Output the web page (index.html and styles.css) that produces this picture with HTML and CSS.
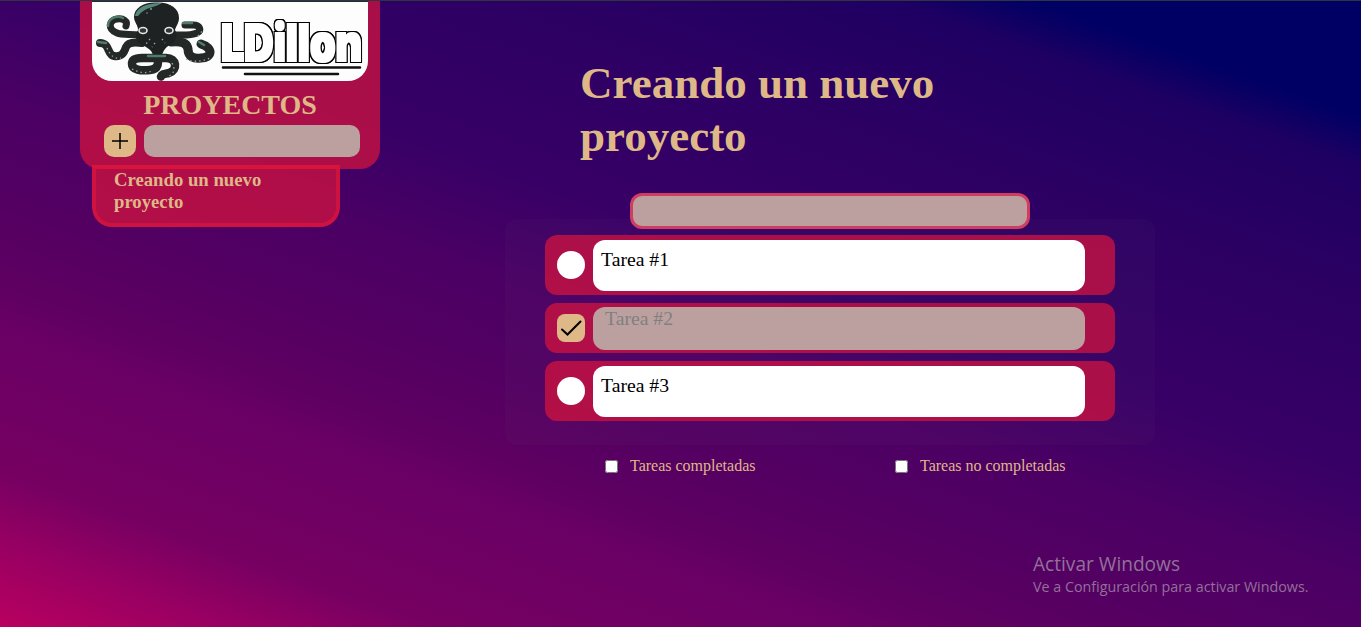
FILE: index.html
```html
<!DOCTYPE html>
<html lang="es">
<head>
<meta charset="utf-8">
<title>Proyectos</title>
<link rel="stylesheet" href="styles.css">
</head>
<body>
<div class="page">
  <aside class="sidebar">
    <div class="panel">
      <div class="logo">
        <svg class="logo-art" viewBox="0 0 276 79" width="276" height="79">
          <defs>
            <filter id="bubble" x="-5%" y="-5%" width="110%" height="110%" color-interpolation-filters="sRGB">
              <feMorphology in="SourceAlpha" operator="dilate" radius="2" result="wide"/>
              <feGaussianBlur in="wide" stdDeviation=".5" result="edge"/>
              <feMorphology in="SourceGraphic" operator="dilate" radius="1" result="face"/>
              <feMerge><feMergeNode in="edge"/><feMergeNode in="edge"/><feMergeNode in="face"/></feMerge>
            </filter>
          </defs>
          <g fill="none" stroke="#242827" stroke-width="8.500" stroke-linecap="round" stroke-linejoin="round">
            <path d="M48 33C38 32 30 33 25 31C15 27 17 18 25 17C31 16 36 19 34 24" stroke-width="7"/>
            <path d="M50 41C43 40 36 40 34 45C32 51 30 55 22 54C15 53 18 41 8 41" stroke-width="8"/>
            <path d="M81 33C90 33 98 34 105 31C110 28 108 23 101 23L93 23" stroke-width="7"/>
            <path d="M79 40C88 39 95 40 96 47C96 55 102 57 109 56C120 56 122 46 109 42" stroke-width="9"/>
            <path d="M65 48C65 56 70 67 58 68C49 69 40 68 40 62C40 57 44 56 50 56H74C85 56 86 68 77 71C72 72 70 72 69 74.500"/>
          </g>
          <path d="M42 15C42 6 52 0 64 .500C78 0 87 6 87 16C87 21 84 24 83 28C86 33 84 38 80 42C75 44 72 47 70 53H61C60 48 54 45 49 42C43 39 43 34 46 28C46 23 42 20 42 15Z" fill="#1e2222"/>
          <path d="M43 14C45 4 57 1 70 1C63 6 54 4 46 14Z" fill="#568778"/>
          <g fill="none" stroke="#4f7b6d" stroke-width="2.500" stroke-linecap="round">
            <path d="M16 24C16 16 25 13 31 16M6 40L14 41M91 21L100 21M107 40L112 43M56 54L73 54"/>
          </g>
          <g fill="none" stroke="#9ca7a3" stroke-width="1.300" stroke-dasharray="1.500 3">
            <path d="M15 46Q20 58 29 56M94 57Q105 62 118 56M40 67Q51 73 60 69M80 61Q85 70 77 74M106 34L111 28M58 37L54 42M70 37L73 41M63 41L60 45"/>
          </g>
          <ellipse cx="51" cy="28.500" rx="4" ry="3" fill="#333" stroke="#e4e8e6" stroke-width="1.600"/>
          <ellipse cx="77" cy="28.500" rx="4" ry="3" fill="#333" stroke="#e4e8e6" stroke-width="1.600"/>
          <circle cx="59" cy="7" r="1" fill="#76a293"/><circle cx="55" cy="11" r=".8" fill="#76a293"/>
          <text class="wordmark" x="129" y="59" textLength="141" lengthAdjust="spacingAndGlyphs" filter="url(#bubble)">LDillon</text>
          <path d="M131 65.500H268M153 72H246" stroke="#111" stroke-width="2.600" stroke-linecap="round"/>
        </svg>
      </div>
      <h2 class="panel-title">PROYECTOS</h2>
      <div class="new-project">
        <button class="add" aria-label="Agregar proyecto">
          <svg viewBox="0 0 16 16" width="16" height="16"><path d="M8 0V16M0 8H16" stroke="#000" stroke-width="1.500"/></svg>
        </button>
        <input class="project-input" type="text">
      </div>
    </div>
    <div class="project">Creando un nuevo proyecto</div>
  </aside>
  <main class="main">
    <h1 class="title">Creando un nuevo proyecto</h1>
    <input class="task-input" type="text">
    <section class="tasks">
      <div class="task"><span class="dot"></span><div class="text">Tarea #1</div></div>
      <div class="task task-done">
        <span class="check"><svg viewBox="0 0 28 28" width="28" height="28"><path d="M5 15.500L10.500 20.500L23.500 7.500" fill="none" stroke="#000" stroke-width="2" stroke-linecap="round"/></svg></span>
        <div class="text text-done">Tarea #2</div>
      </div>
      <div class="task"><span class="dot"></span><div class="text">Tarea #3</div></div>
    </section>
    <div class="filters">
      <label class="filter"><input class="box" type="checkbox">Tareas completadas</label>
      <label class="filter"><input class="box" type="checkbox">Tareas no completadas</label>
    </div>
  </main>
  <div class="watermark">
    <div class="watermark-title">Activar Windows</div>
    <div class="watermark-text">Ve a Configuración para activar Windows.</div>
  </div>
</div>
</body>
</html>
```
FILE: styles.css
```css
* { box-sizing: border-box; }
body { margin: 0; }
.page {
  position: relative;
  display: flex;
  align-items: flex-start;
  width: 1361px;
  height: 627px;
  overflow: hidden;
  padding-left: 80px;
  border-top: 1px solid #30343f;
  font-family: "Liberation Serif", "Times New Roman", serif;
  color: burlywood;
  background: linear-gradient(19.5deg, #b90060 0%, #960062 7.8%, #760062 14%, #6a0065 27%, #5e0062 31%, #540062 38%, #4c0064 47%, #380066 57%, #2c0063 73%, #1e0062 85%, #000064 89.500%);
}
.sidebar { width: 300px; }
.panel {
  height: 168px;
  padding: 0 12px;
  border-radius: 0 0 20px 20px;
  background: rgba(220, 20, 60, .7);
}
.logo {
  height: 80px;
  border-top: 1px solid #252936;
  border-radius: 0 0 20px 20px;
  background: #fdfdfd;
}
.logo-art { display: block; overflow: visible; }
.wordmark {
  font: 900 51px Inter, sans-serif;
  fill: #fff;
}
.panel-title {
  margin: 7px 0 4px;
  font-size: 28px;
  line-height: 33px;
  text-align: center;
}
.new-project { display: flex; gap: 8px; padding-left: 12px; }
.add {
  display: grid;
  place-items: center;
  width: 32px;
  height: 32px;
  padding: 0;
  border: 0;
  border-radius: 10px;
  background: burlywood;
}
.project-input {
  width: 216px;
  height: 32px;
  border: 0;
  border-radius: 10px;
  background: #bba09f;
}
.project {
  width: 248px;
  height: 62px;
  margin: -4px 0 0 12px;
  padding: 0 60px 0 18px;
  border: 4px solid rgba(220, 20, 60, .7);
  border-radius: 0 0 20px 20px;
  background: rgba(220, 20, 60, .7);
  font-size: 18.72px;
  font-weight: 700;
  line-height: 22px;
}
.main {
  display: flex;
  flex-direction: column;
  align-items: center;
  width: 650px;
  margin-left: 125px;
  padding-top: 56px;
}
.title {
  width: 500px;
  margin: 0 0 30px;
  padding-right: 100px;
  font-size: 45px;
  line-height: 53px;
}
.task-input {
  position: relative;
  width: 400px;
  height: 36px;
  border: 3px solid #d13c61;
  border-radius: 12px;
  background: #bba09f;
}
.tasks {
  display: flex;
  flex-direction: column;
  gap: 8px;
  width: 650px;
  height: 226px;
  margin-top: -10px;
  padding: 16px 40px 0;
  border-radius: 12px;
  background: rgba(128, 128, 128, .04);
}
.task {
  display: flex;
  align-items: center;
  gap: 8px;
  height: 60px;
  padding-left: 12px;
  border-radius: 12px;
  background: rgba(220, 20, 60, .7);
}
.task-done { height: 50px; }
.dot { width: 28px; height: 28px; border-radius: 50%; background: #fff; }
.check { width: 28px; height: 28px; border-radius: 8px; background: burlywood; }
.text {
  width: 492px;
  height: 51px;
  padding: 8px;
  border-radius: 12px;
  background: #fff;
  color: #000;
  font-size: 19.7px;
  line-height: 22px;
}
.text-done {
  height: 43px;
  padding: 0 12px;
  background: #bba09f;
  color: #808080;
}
.filters {
  display: grid;
  grid-template-columns: 290px 260px;
  width: 450px;
  margin-top: 12px;
}
.filter {
  display: flex;
  align-items: center;
  gap: 12px;
  font-size: 16px;
  line-height: 18px;
}
.box { width: 13px; height: 13px; margin: 0; }
.watermark {
  position: absolute;
  left: 1033px;
  top: 551px;
  font-family: "Open Sans", sans-serif;
  color: #93709a;
  white-space: nowrap;
}
.watermark-title { font-size: 19.1px; line-height: 24px; }
.watermark-text { font-size: 14.3px; line-height: 21px; }
```
